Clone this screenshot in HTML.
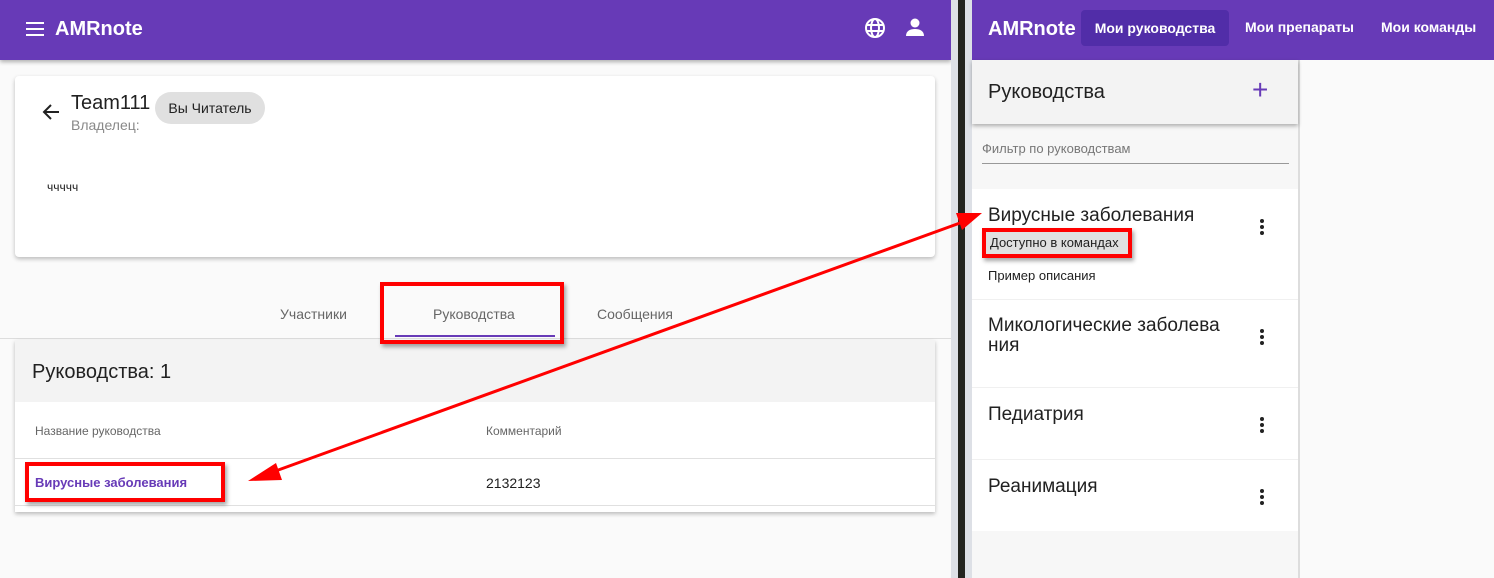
<!DOCTYPE html>
<html><head><meta charset="utf-8"><style>
*{box-sizing:border-box;margin:0;padding:0}
body{width:1494px;height:578px;overflow:hidden;background:#fafafa;font-family:"Liberation Sans",sans-serif;position:relative;color:#212121}
.abs{position:absolute}
.hdr{background:#673ab7;color:#fff}
.card{background:#fff;box-shadow:0 2px 4px rgba(0,0,0,.25)}
.red{border:4px solid #f00;box-shadow:2px 3px 4px rgba(0,0,0,.35);z-index:5}
.dots{position:absolute;width:4px}
.dots i{display:block;width:4px;height:4px;border-radius:50%;background:#222;margin-bottom:2px}
</style></head><body>
<div class="abs hdr" style="left:0;top:0;width:951px;height:60px;box-shadow:0 2px 4px rgba(0,0,0,.3)">
  <div class="abs" style="left:26px;top:22px;width:18px;height:2px;background:#fff;box-shadow:0 6px 0 #fff,0 12px 0 #fff"></div>
  <div class="abs" style="left:55px;top:18px;font-size:20px;font-weight:bold">AMRnote</div>
  <svg class="abs" style="left:864px;top:17px" width="22" height="22" viewBox="0 0 22 22" fill="none" stroke="#fff" stroke-width="2"><circle cx="11" cy="11" r="9"/><ellipse cx="11" cy="11" rx="4" ry="9"/><path d="M2 8h18M2 14h18"/></svg>
  <svg class="abs" style="left:905px;top:17px" width="20" height="20" viewBox="0 0 20 20" fill="#fff"><circle cx="10" cy="6" r="4.5"/><path d="M1 19c0-5 4-7 9-7s9 2 9 7z"/></svg>
</div>
<div class="abs card" style="left:15px;top:76px;width:920px;height:181px;border-radius:4px">
  <svg class="abs" style="left:26px;top:27px" width="20" height="18" viewBox="0 0 20 18" fill="none" stroke="#222" stroke-width="2"><path d="M18 9H3M10 2L3 9l7 7"/></svg>
  <div class="abs" style="left:56px;top:16px;font-size:20px">Team111</div>
  <div class="abs" style="left:56px;top:41px;font-size:14px;color:#888">Владелец:</div>
  <div class="abs" style="left:140px;top:16px;width:110px;height:32px;border-radius:16px;background:#e0e0e0;font-size:14px;line-height:32px;text-align:center">Вы Читатель</div>
  <div class="abs" style="left:32px;top:104px;font-size:12px">ччччч</div>
</div>
<div class="abs" style="left:0;top:338px;width:951px;height:1px;background:#ddd"></div>
<div class="abs" style="left:280px;top:306px;font-size:14px;color:#666">Участники</div>
<div class="abs" style="left:433px;top:306px;font-size:14px;color:#666">Руководства</div>
<div class="abs" style="left:597px;top:306px;font-size:14px;color:#666">Сообщения</div>
<div class="abs" style="left:395px;top:335px;width:160px;height:2px;background:#673ab7"></div>
<div class="abs card" style="left:15px;top:340px;width:920px;height:172px">
  <div class="abs" style="left:0;top:0;width:920px;height:62px;background:#f3f3f3"></div>
  <div class="abs" style="left:17px;top:21px;font-size:20px">Руководства: 1</div>
  <div class="abs" style="left:20px;top:84px;font-size:12px;color:#666">Название руководства</div>
  <div class="abs" style="left:471px;top:84px;font-size:12px;color:#666">Комментарий</div>
  <div class="abs" style="left:0;top:118px;width:920px;height:1px;background:#e0e0e0"></div>
  <div class="abs" style="left:20px;top:135px;font-size:13px;font-weight:bold;color:#673ab7">Вирусные заболевания</div>
  <div class="abs" style="left:471px;top:135px;font-size:14px">2132123</div>
  <div class="abs" style="left:0;top:165px;width:920px;height:1px;background:#e0e0e0"></div>
</div>
<div class="abs red" style="left:380px;top:282px;width:184px;height:62px"></div>
<div class="abs red" style="left:25px;top:462px;width:200px;height:40px"></div>
<div class="abs" style="left:951px;top:0;width:21px;height:578px;background:#dde0e6"></div>
<div class="abs" style="left:958px;top:0;width:7px;height:578px;background:#23241f"></div>
<div class="abs hdr" style="left:972px;top:0;width:522px;height:60px">
  <div class="abs" style="left:16px;top:18px;font-size:20px;font-weight:bold">AMRnote</div>
  <div class="abs" style="left:109px;top:10px;width:148px;height:36px;background:#512da8;border-radius:4px;font-size:14px;font-weight:bold;line-height:36px;text-align:center">Мои руководства</div>
  <div class="abs" style="left:273px;top:19px;font-size:14px;font-weight:bold">Мои препараты</div>
  <div class="abs" style="left:409px;top:19px;font-size:14px;font-weight:bold">Мои команды</div>
</div>
<div class="abs" style="left:972px;top:60px;width:328px;height:518px;background:#f7f7f7;border-right:2px solid #ddd"></div>
<div class="abs" style="left:972px;top:60px;width:326px;height:64px;background:#f3f3f3;box-shadow:0 2px 4px rgba(0,0,0,.3)">
  <div class="abs" style="left:16px;top:21px;font-size:20px">Руководства</div>
  <div class="abs" style="left:280px;top:14px;font-size:28px;color:#673ab7;font-weight:300">+</div>
</div>
<div class="abs" style="left:982px;top:141px;font-size:13px;color:#777">Фильтр по руководствам</div>
<div class="abs" style="left:982px;top:163px;width:307px;height:1px;background:#999"></div>
<div class="abs" style="left:972px;top:189px;width:326px;height:342px;background:#fff"></div>
<div class="abs" style="left:972px;top:299px;width:326px;height:1px;background:#f0f0f0"></div>
<div class="abs" style="left:972px;top:387px;width:326px;height:1px;background:#f0f0f0"></div>
<div class="abs" style="left:972px;top:459px;width:326px;height:1px;background:#f0f0f0"></div>
<div class="abs" style="left:988px;top:205px;font-size:19px">Вирусные заболевания</div>
<div class="abs" style="left:984px;top:229px;width:148px;height:28px;background:#e0e0e0"></div>
<div class="abs red" style="left:982px;top:228px;width:150px;height:30px"></div>
<div class="abs" style="left:990px;top:235px;font-size:13px;z-index:6">Доступно в командах</div>
<div class="abs" style="left:988px;top:268px;font-size:13px">Пример описания</div>
<div class="dots" style="left:1260px;top:219px"><i></i><i></i><i></i></div>
<div class="abs" style="left:988px;top:316px;font-size:19px;line-height:20px;width:260px">Микологические заболева ния</div>
<div class="dots" style="left:1260px;top:329px"><i></i><i></i><i></i></div>
<div class="abs" style="left:988px;top:404px;font-size:19px">Педиатрия</div>
<div class="dots" style="left:1260px;top:417px"><i></i><i></i><i></i></div>
<div class="abs" style="left:988px;top:476px;font-size:19px">Реанимация</div>
<div class="dots" style="left:1260px;top:489px"><i></i><i></i><i></i></div>
<svg class="abs" style="left:0;top:0;z-index:10" width="1494" height="578">
<line x1="270" y1="473" x2="960" y2="223" stroke="#f00" stroke-width="3"/>
<polygon points="248,481 276,463 282,480" fill="#f00"/>
<polygon points="982,213 956,213 962,230" fill="#f00"/>
</svg>
</body></html>
